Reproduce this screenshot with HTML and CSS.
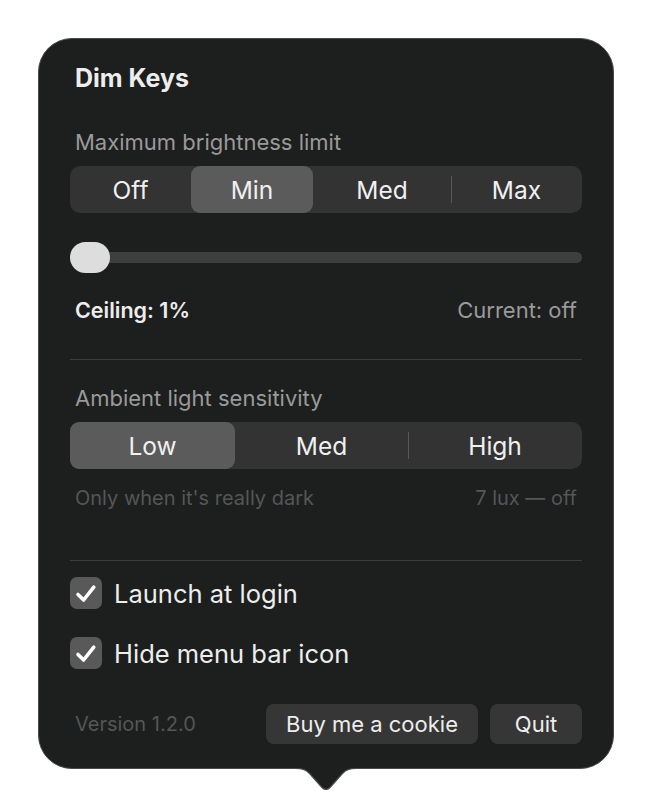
FILE: index.html
```html
<!DOCTYPE html>
<html lang="en">
<head>
<meta charset="utf-8">
<title>Dim Keys</title>
<link rel="stylesheet" href="styles.css">
</head>
<body>
<div class="popup">
  <div class="popover">
    <h1 class="title">Dim Keys</h1>

    <div class="label label-brightness">Maximum brightness limit</div>
    <div class="segmented seg-four">
      <div class="seg">Off</div>
      <div class="seg selected">Min</div>
      <div class="seg">Med</div>
      <div class="seg divided">Max</div>
    </div>

    <div class="slider">
      <div class="track"></div>
      <div class="thumb"></div>
    </div>

    <div class="readout">
      <span class="ceiling">Ceiling: 1%</span>
      <span class="current">Current: off</span>
    </div>

    <div class="divider divider-top"></div>

    <div class="label label-ambient">Ambient light sensitivity</div>
    <div class="segmented seg-three">
      <div class="seg selected">Low</div>
      <div class="seg">Med</div>
      <div class="seg divided">High</div>
    </div>

    <div class="hint">
      <span>Only when it's really dark</span>
      <span>7 lux — off</span>
    </div>

    <div class="divider divider-bottom"></div>

    <label class="check check-first">
      <span class="box">
        <svg viewBox="0 0 32 32" width="32" height="32"><path d="M8 17.5 L13.6 23 L23.8 10.2" fill="none" stroke="#ffffff" stroke-width="3.6" stroke-linecap="round" stroke-linejoin="round"/></svg>
      </span>
      <span class="check-text">Launch at login</span>
    </label>
    <label class="check check-second">
      <span class="box">
        <svg viewBox="0 0 32 32" width="32" height="32"><path d="M8 17.5 L13.6 23 L23.8 10.2" fill="none" stroke="#ffffff" stroke-width="3.6" stroke-linecap="round" stroke-linejoin="round"/></svg>
      </span>
      <span class="check-text">Hide menu bar icon</span>
    </label>

    <div class="footer">
      <span class="version">Version 1.2.0</span>
      <div class="buttons">
        <button class="btn btn-cookie">Buy me a cookie</button>
        <button class="btn btn-quit">Quit</button>
      </div>
    </div>
  </div>

  <!-- pointer under the popover, overlapping its bottom border -->
  <svg class="arrow" viewBox="0 0 62 25" width="62" height="25">
    <path d="M0 0 L62 0 L62 2.5 C54 2.5 51 3.5 47 8 L35 21.5 Q31 25.5 27 21.5 L15 8 C11 3.5 8 2.5 0 2.5 Z" fill="#1d1e1e"/>
    <path d="M0 2.5 C8 2.5 11 3.5 15 8 L27 21.5 Q31 25.5 35 21.5 L47 8 C51 3.5 54 2.5 62 2.5" fill="none" stroke="#4a4a4a" stroke-width="1.2"/>
  </svg>
</div>
</body>
</html>
```

FILE: styles.css
```css
* {
  box-sizing: border-box;
}

html, body {
  margin: 0;
  padding: 0;
  background: #ffffff;
}

body {
  font-family: Inter, "Noto Sans", "Liberation Sans", sans-serif;
  -webkit-font-smoothing: antialiased;
  padding: 38px 0 40px 38px;
}

.popup {
  position: relative;
  width: 576px;
}

.popover {
  width: 576px;
  height: 731px;
  background: #1d1e1e;
  border: 1px solid #4a4a4a;
  border-radius: 34px;
  padding: 25px 31px 0 31px;
  display: flex;
  flex-direction: column;
}

.title {
  margin: 0 0 0 5px;
  font-size: 25px;
  line-height: 28px;
  font-weight: 700;
  color: #ededed;
}

.label {
  margin-left: 5px;
  font-size: 22px;
  line-height: 26px;
  color: #9a9a9a;
}

.label-brightness {
  margin-top: 37px;
}

.label-ambient {
  margin-top: 25px;
}

.segmented {
  margin-top: 11px;
  height: 47px;
  background: #333333;
  border-radius: 10px;
  display: grid;
}

.seg-four {
  grid-template-columns: 121px 122px 138px 131px;
}

.seg-three {
  grid-template-columns: 165px 173px 174px;
}

.seg {
  position: relative;
  display: flex;
  align-items: center;
  justify-content: center;
  font-size: 24.5px;
  color: #f0f0f0;
  border-radius: 9px;
}

.seg.selected {
  background: #5b5b5b;
}

.seg.divided::before {
  content: "";
  position: absolute;
  left: 0;
  top: 10px;
  bottom: 10px;
  width: 1px;
  background: #585858;
}

.slider {
  position: relative;
  margin-top: 29px;
  height: 31px;
  display: flex;
  align-items: center;
}

.track {
  flex: 1;
  height: 11px;
  border-radius: 6px;
  background: #3e3e3e;
}

.thumb {
  position: absolute;
  left: 0;
  top: 0;
  width: 40px;
  height: 31px;
  border-radius: 16px;
  background: #dddddd;
}

.readout {
  margin-top: 24px;
  padding: 0 5px;
  display: flex;
  justify-content: space-between;
  align-items: baseline;
  line-height: 26px;
}

.ceiling {
  font-size: 21.5px;
  font-weight: 600;
  color: #ededed;
}

.current {
  font-size: 22px;
  color: #9a9a9a;
}

.divider {
  height: 1px;
  background: #3c3c3c;
}

.divider-top {
  margin-top: 36px;
}

.divider-bottom {
  margin-top: 49px;
}

.hint {
  margin-top: 16px;
  padding: 0 5px;
  display: flex;
  justify-content: space-between;
  font-size: 20px;
  line-height: 26px;
  color: #555656;
}

.check {
  display: flex;
  align-items: center;
  height: 32px;
  gap: 12px;
}

.check-first {
  margin-top: 16px;
}

.check-second {
  margin-top: 28px;
}

.box {
  width: 32px;
  height: 32px;
  border-radius: 7px;
  background: #595959;
  display: flex;
}

.check-text {
  font-size: 25.5px;
  color: #ededed;
}

.footer {
  margin-top: 35px;
  padding-left: 5px;
  display: flex;
  align-items: center;
  justify-content: space-between;
}

.version {
  font-size: 20px;
  color: #555656;
}

.buttons {
  display: flex;
  gap: 12px;
}

.btn {
  height: 40px;
  border: none;
  border-radius: 8px;
  background: #363636;
  color: #ededed;
  font-family: inherit;
  font-size: 22px;
  padding: 0;
}

.btn-cookie {
  width: 212px;
}

.btn-quit {
  width: 92px;
}

.arrow {
  position: absolute;
  display: block;
  z-index: 1;
  left: 257px;
  top: 728px;
}
```
